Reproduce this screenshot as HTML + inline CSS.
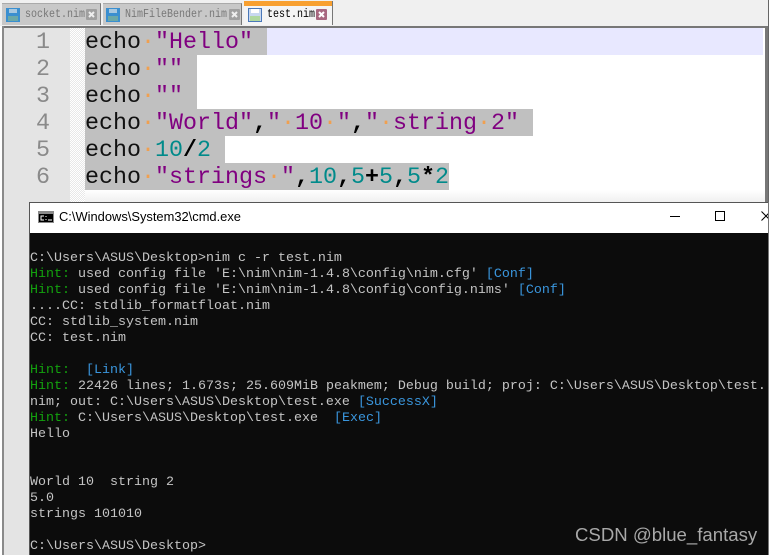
<!DOCTYPE html>
<html><head><meta charset="utf-8"><style>
html,body{margin:0;padding:0;background:#fff}
#p{position:relative;width:775px;height:555px;overflow:hidden;background:#fff}
#p div,#p span.a{position:absolute}
.tab{top:3px;height:22px;background:#c8c8c8;border-right:1px solid #777;border-top:1px solid #aaa;box-sizing:border-box}
.tt{position:absolute;font:10px/16px "Liberation Mono",monospace;color:#777;white-space:pre;transform:scaleY(1.15);transform-origin:0 50%}
.ed{left:85px;font:23.33px/31px "Liberation Mono",monospace;color:#111;white-space:pre;height:27px;background:#c0c0c0}
.n{left:4px;width:46px;text-align:right;font:23.33px/31px "Liberation Mono",monospace;color:#8a8a8a;height:27px}
.s{color:#800080}.d{color:#008a8a}.b{font-weight:bold;color:#000}.o{color:#f0a050}
#c{left:30px;top:233px;width:738px;height:322px;background:#0c0c0c;font:13.33px/20px "Liberation Mono",monospace;color:#c4c4c4;white-space:pre;overflow:hidden}
.l{left:0;height:16px}
.g{color:#13a10e}.u{color:#3a96dd}
#wm{left:575px;top:524px;font:18.6px/22px "Liberation Sans",sans-serif;color:#a8a8a8;white-space:pre}
</style></head><body><div id="p">
<div style="left:0;top:0;width:768px;height:26px;background:#f0f0f0"></div>
<div style="left:768px;top:0;width:1px;height:202px;background:#666"></div>

<div class="tab" style="left:2px;width:99px"></div>
<div class="tab" style="left:103px;width:139px"></div>
<div style="left:244px;top:1px;width:89px;height:24px;background:#f4f4f4;border-right:1px solid #777;box-sizing:border-box"></div>
<div style="left:244px;top:1px;width:88px;height:5px;background:#f8a030"></div>

<svg style="position:absolute;left:6px;top:8px" width="14" height="14" viewBox="0 0 14 14"><rect width="14" height="14" fill="#3a8fd0"/><rect x="3" y="1" width="8" height="4" fill="#a8c8e0"/><rect x="2" y="8" width="10" height="5" fill="#6aa8a8"/></svg>
<div class="tt" style="left:25px;top:8px">socket.nim</div>
<svg style="position:absolute;left:86px;top:9px" width="11" height="11" viewBox="0 0 11 11"><rect width="11" height="11" rx="1" fill="#a0a0a0"/><path d="M3 3l5 5M8 3l-5 5" stroke="#eee" stroke-width="2"/></svg>

<svg style="position:absolute;left:106px;top:8px" width="14" height="14" viewBox="0 0 14 14"><rect width="14" height="14" fill="#3a8fd0"/><rect x="3" y="1" width="8" height="4" fill="#a8c8e0"/><rect x="2" y="8" width="10" height="5" fill="#6aa8a8"/></svg>
<div class="tt" style="left:125px;top:8px">NimFileBender.nim</div>
<svg style="position:absolute;left:229px;top:9px" width="11" height="11" viewBox="0 0 11 11"><rect width="11" height="11" rx="1" fill="#a0a0a0"/><path d="M3 3l5 5M8 3l-5 5" stroke="#eee" stroke-width="2"/></svg>

<svg style="position:absolute;left:248px;top:8px" width="14" height="14" viewBox="0 0 14 14"><rect x=".5" y=".5" width="13" height="13" fill="#c8d8f0" stroke="#4a78b8"/><rect x="3" y="1" width="8" height="4" fill="#fff"/><rect x="2" y="8" width="10" height="5" fill="#b0d8a0"/></svg>
<div class="tt" style="left:267px;top:8px;color:#000">test.nim</div>
<svg style="position:absolute;left:316px;top:9px" width="11" height="11" viewBox="0 0 11 11"><rect width="11" height="11" rx="1" fill="#a86880"/><path d="M3 3l5 5M8 3l-5 5" stroke="#fff" stroke-width="2"/></svg>

<div style="left:3px;top:26px;width:765px;height:2px;background:#777"></div>
<div style="left:2px;top:26px;width:2px;height:529px;background:#8a8a8a"></div>
<div style="left:765px;top:26px;width:3px;height:176px;background:#777"></div>
<div style="left:4px;top:28px;width:66px;height:527px;background:#e4e4e4"></div>
<div style="left:70px;top:28px;width:15px;height:527px;background:repeating-conic-gradient(#e8e8e8 0 25%,#fff 0 50%) 0 0/2px 2px"></div>
<div style="left:85px;top:190px;width:680px;height:12px;background:linear-gradient(#fff,#f0f0f0)"></div>

<div style="left:267px;top:28px;width:496px;height:27px;background:#e8e8ff"></div>

<div class="n" style="top:28px">1</div>
<div class="n" style="top:55px">2</div>
<div class="n" style="top:82px">3</div>
<div class="n" style="top:109px">4</div>
<div class="n" style="top:136px">5</div>
<div class="n" style="top:163px">6</div>

<div class="ed" style="top:28px;width:182px">echo<span class="o">·</span><span class="s">"Hello"</span></div>
<div class="ed" style="top:55px;width:112px">echo<span class="o">·</span><span class="s">""</span></div>
<div class="ed" style="top:82px;width:112px">echo<span class="o">·</span><span class="s">""</span></div>
<div class="ed" style="top:109px;width:448px">echo<span class="o">·</span><span class="s">"World"</span><span class="b">,</span><span class="s">"</span><span class="o">·</span><span class="s">10</span><span class="o">·</span><span class="s">"</span><span class="b">,</span><span class="s">"</span><span class="o">·</span><span class="s">string</span><span class="o">·</span><span class="s">2"</span></div>
<div class="ed" style="top:136px;width:140px">echo<span class="o">·</span><span class="d">10</span><span class="b">/</span><span class="d">2</span></div>
<div class="ed" style="top:163px;width:364px">echo<span class="o">·</span><span class="s">"strings</span><span class="o">·</span><span class="s">"</span><span class="b">,</span><span class="d">10</span><span class="b">,</span><span class="d">5</span><span class="b">+</span><span class="d">5</span><span class="b">,</span><span class="d">5</span><span class="b">*</span><span class="d">2</span></div>

<div style="left:29px;top:202px;width:739px;height:1px;background:#555"></div>
<div style="left:29px;top:202px;width:1px;height:353px;background:#555"></div>
<div style="left:30px;top:203px;width:738px;height:30px;background:#fff"></div>
<div style="left:768px;top:202px;width:1px;height:353px;background:#777"></div>
<svg style="position:absolute;left:38px;top:211px" width="16" height="12" viewBox="0 0 16 12"><rect width="16" height="12" fill="#8a8a8a"/><rect x="1" y="3" width="14" height="8" fill="#000"/><path d="M6 5H3v4h3M8 5v1M8 8v1M10 9h4" stroke="#fff" fill="none"/></svg>
<div style="left:59px;top:209px;font:12.9px/16px 'Liberation Sans',sans-serif;color:#000;white-space:pre">C:\Windows\System32\cmd.exe</div>
<svg style="position:absolute;left:665px;top:205px" width="103" height="24" viewBox="0 0 103 24"><path d="M5 11.500h10" stroke="#000"/><rect x="50.500" y="6.500" width="9" height="9" fill="none" stroke="#000"/><path d="M96.500 6.500l9 9M105.500 6.500l-9 9" stroke="#000"/></svg>

<div id="c">
<div class="l" style="top:16px">C:\Users\ASUS\Desktop&gt;nim c -r test.nim</div>
<div class="l" style="top:32px"><span class="g">Hint:</span> used config file 'E:\nim\nim-1.4.8\config\nim.cfg' <span class="u">[Conf]</span></div>
<div class="l" style="top:48px"><span class="g">Hint:</span> used config file 'E:\nim\nim-1.4.8\config\config.nims' <span class="u">[Conf]</span></div>
<div class="l" style="top:64px">....CC: stdlib_formatfloat.nim</div>
<div class="l" style="top:80px">CC: stdlib_system.nim</div>
<div class="l" style="top:96px">CC: test.nim</div>
<div class="l" style="top:128px"><span class="g">Hint:</span>  <span class="u">[Link]</span></div>
<div class="l" style="top:144px"><span class="g">Hint:</span> 22426 lines; 1.673s; 25.609MiB peakmem; Debug build; proj: C:\Users\ASUS\Desktop\test.</div>
<div class="l" style="top:160px">nim; out: C:\Users\ASUS\Desktop\test.exe <span class="u">[SuccessX]</span></div>
<div class="l" style="top:176px"><span class="g">Hint:</span> C:\Users\ASUS\Desktop\test.exe  <span class="u">[Exec]</span></div>
<div class="l" style="top:192px">Hello</div>
<div class="l" style="top:240px">World 10  string 2</div>
<div class="l" style="top:256px">5.0</div>
<div class="l" style="top:272px">strings 101010</div>
<div class="l" style="top:304px">C:\Users\ASUS\Desktop&gt;</div>
</div>
<div id="wm">CSDN @blue_fantasy</div>
</div></body></html>
